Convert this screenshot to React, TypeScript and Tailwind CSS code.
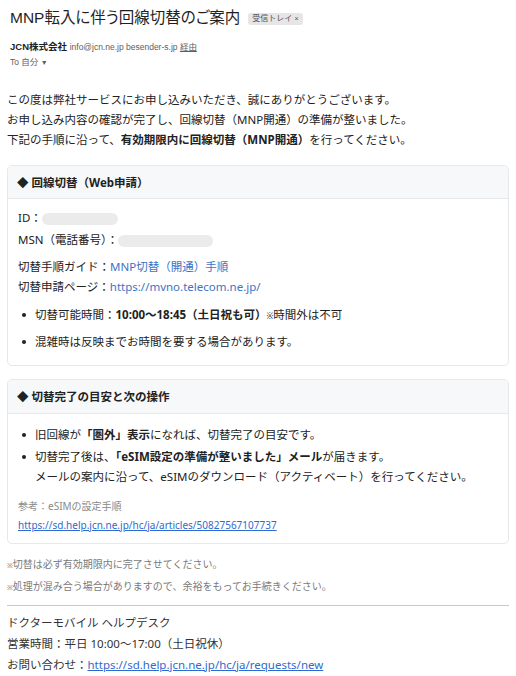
import React from 'react';

const font = { fontFamily: '"Noto Sans", "Noto Sans CJK JP", sans-serif' };
const headFont = { fontFamily: '"Liberation Sans", "Noto Sans CJK JP", sans-serif' };

function Redacted({ w }: { w: string }) {
  return <span className={`inline-block h-[12px] ${w} rounded-full bg-[#ebebeb] align-middle`} />;
}

function Bullet({ children }: { children: React.ReactNode }) {
  return (
    <div className="flex">
      <span className="flex h-[20px] w-[17px] shrink-0 items-center pl-[4px]">
        <span className="h-[4px] w-[4px] rounded-full bg-[#222]" />
      </span>
      <div>{children}</div>
    </div>
  );
}

export default function App() {
  return (
    <div className="min-h-[676px] w-[516px] bg-white text-[#222]" style={font}>
      <div className="px-[10px] pt-[6px]" style={headFont}>
        <div className="flex items-center gap-[8px]">
          <h1 className="text-[15.5px] leading-[24px] text-[#1f1f1f]" style={{ fontFeatureSettings: '"palt"' }}>MNP転入に伴う回線切替のご案内</h1>
          <span className="mt-[2px] rounded-[3px] bg-[#e6e6e6] px-[4px] text-[8px] leading-[12px] text-[#555]">受信トレイ <span className="text-[7px]">×</span></span>
        </div>
        <div className="mt-[9px] text-[9.5px] leading-[16px]">
          <span className="font-bold text-[#1f1f1f]">JCN株式会社</span>{' '}
          <span className="text-[8.5px] text-[#5e5e5e]">info@jcn.ne.jp besender-s.jp <span className="underline">経由</span></span>
        </div>
        <div className="text-[8.5px] leading-[15px] text-[#5e5e5e]">To 自分 <span className="text-[7px]">▼</span></div>
      </div>

      <div className="px-[7px] text-[11.5px]">
        <div className="mt-[20px] leading-[20px]">
          <p>この度は弊社サービスにお申し込みいただき、誠にありがとうございます。</p>
          <p>お申し込み内容の確認が完了し、回線切替（MNP開通）の準備が整いました。</p>
          <p>下記の手順に沿って、<b>有効期限内に回線切替（MNP開通）</b>を行ってください。</p>
        </div>

        <div className="mt-[15px] overflow-hidden rounded-[5px] border border-[#e6e8eb]">
          <div className="h-[33px] border-b border-[#e6e8eb] bg-[#f7f8fa] px-[9px] text-[11.5px] font-bold leading-[33px]">◆ 回線切替（Web申請）</div>
          <div className="px-[10px] pb-[13px] pt-[8px]">
            <div className="leading-[22px]">ID：<Redacted w="w-[76px]" /></div>
            <div className="leading-[22px]">MSN（電話番号）：<Redacted w="w-[95px]" /></div>
            <div className="mt-[6px] leading-[20px]">切替手順ガイド：<span className="text-[#3a74c5]">MNP切替（開通）手順</span></div>
            <div className="leading-[20px]">切替申請ページ：<span className="text-[#3a74c5]">https://mvno.telecom.ne.jp/</span></div>
            <div className="mt-[8px] space-y-[6px] leading-[20px]">
              <Bullet>切替可能時間：<b>10:00〜18:45（土日祝も可）</b><span className="text-[8px]">※</span>時間外は不可</Bullet>
              <Bullet>混雑時は反映までお時間を要する場合があります。</Bullet>
            </div>
          </div>
        </div>

        <div className="mt-[13px] overflow-hidden rounded-[5px] border border-[#e6e8eb]">
          <div className="h-[34px] border-b border-[#e6e8eb] bg-[#f7f8fa] px-[9px] text-[11.5px] font-bold leading-[34px]">◆ 切替完了の目安と次の操作</div>
          <div className="px-[10px] pb-[8px] pt-[11px]">
            <div className="space-y-[2px] leading-[20px]">
              <Bullet>旧回線が<b>「圏外」表示</b>になれば、切替完了の目安です。</Bullet>
              <Bullet>
                切替完了後は、<b>「eSIM設定の準備が整いました」メール</b>が届きます。
                <br />
                メールの案内に沿って、eSIMのダウンロード（アクティベート）を行ってください。
              </Bullet>
            </div>
            <div className="mt-[10px] text-[10px] leading-[18px] text-[#8a8a8a]">参考：eSIMの設定手順</div>
            <div className="text-[10px] leading-[20px] text-[#2f6ad0] underline">https://sd.help.jcn.ne.jp/hc/ja/articles/50827567107737</div>
          </div>
        </div>

        <div className="mt-[10px] text-[10px] leading-[20px] text-[#7a7a7a]">
          <p><span className="text-[7px]">※</span>切替は必ず有効期限内に完了させてください。</p>
          <p><span className="text-[7px]">※</span>処理が混み合う場合がありますので、余裕をもってお手続きください。</p>
        </div>
        <div className="mt-[7px] border-t border-[#c8c8c8]" />
        <div className="mt-[6px] leading-[21px] text-[#333]">
          <p>ドクターモバイル ヘルプデスク</p>
          <p>営業時間：平日 10:00〜17:00（土日祝休）</p>
          <p>お問い合わせ：<span className="text-[#2f6ad0] underline">https://sd.help.jcn.ne.jp/hc/ja/requests/new</span></p>
        </div>
      </div>
    </div>
  );
}
